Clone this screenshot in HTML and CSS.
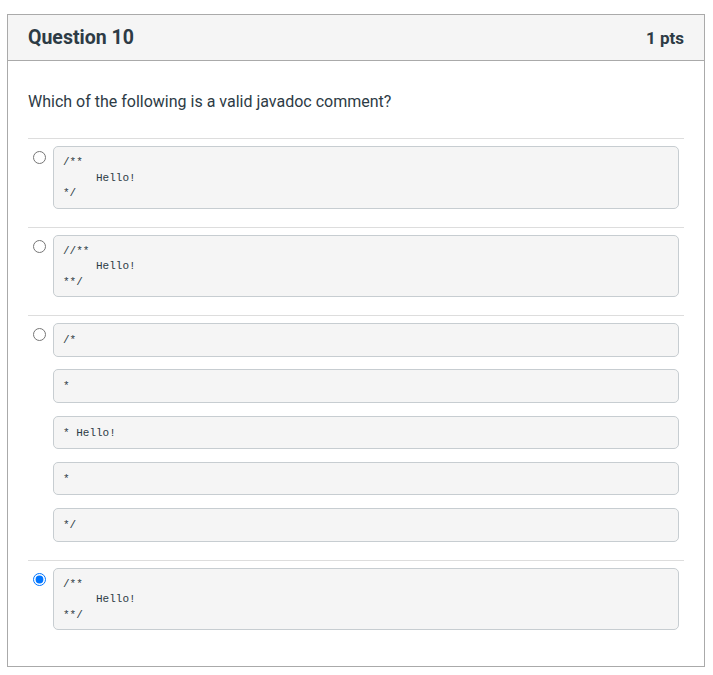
FILE: index.html
```html
<!DOCTYPE html>
<html>
<head>
<meta charset="utf-8">
<link rel="stylesheet" href="styles.css">
</head>
<body>
<div class="card">
  <div class="card-header">
    <h2 class="q-title">Question 10</h2>
    <span class="q-points">1 pts</span>
  </div>
  <div class="card-body">
    <p class="q-text">Which of the following is a valid javadoc comment?</p>
    <div class="answer">
      <input class="radio" type="radio" name="q10">
      <div class="boxes">
        <pre class="code multi">/**
     Hello!
*/</pre>
      </div>
    </div>
    <div class="answer">
      <input class="radio" type="radio" name="q10">
      <div class="boxes">
        <pre class="code multi">//**
     Hello!
**/</pre>
      </div>
    </div>
    <div class="answer">
      <input class="radio" type="radio" name="q10">
      <div class="boxes">
        <pre class="code single">/*</pre>
        <pre class="code single">*</pre>
        <pre class="code single">* Hello!</pre>
        <pre class="code single">*</pre>
        <pre class="code single">*/</pre>
      </div>
    </div>
    <div class="answer">
      <input class="radio" type="radio" name="q10" checked>
      <div class="boxes">
        <pre class="code multi">/**
     Hello!
**/</pre>
      </div>
    </div>
  </div>
</div>
</body>
</html>
```

FILE: styles.css
```css
html, body {
  margin: 0;
  padding: 0;
  background: #ffffff;
}

body {
  font-family: Roboto, "Liberation Sans", sans-serif;
  color: #2d3b45;
}

.card {
  margin: 14px 8px 0 7px;
  border: 1px solid #aaaaaa;
}

.card-header {
  height: 45px;
  background: #f5f5f5;
  border-bottom: 1px solid #aaaaaa;
  display: flex;
  align-items: center;
  justify-content: space-between;
  padding: 0 20px;
}

.q-title {
  margin: 0;
  font-size: 19.5px;
  font-weight: 700;
  color: #2d3b45;
}

.q-points {
  font-size: 17px;
  font-weight: 700;
  color: #2d3b45;
}

.card-body {
  padding: 20px 20px 18px;
}

.q-text {
  margin: 9px 0 24px;
  font-size: 16px;
  line-height: 24px;
}

.answer {
  display: flex;
  align-items: flex-start;
  border-top: 1px solid #dddddd;
  padding: 7px 0 18px;
}

.radio {
  flex-shrink: 0;
  width: 13px;
  height: 13px;
  margin: 5px 7px 0 5px;
  accent-color: #0075ff;
}

.boxes {
  flex: 1;
  margin-right: 5px;
  display: flex;
  flex-direction: column;
  gap: 12.75px;
}

.code {
  margin: 0;
  background: #f5f5f5;
  border: 1px solid #c7cdd1;
  border-radius: 5px;
  font-family: "Liberation Mono", "DejaVu Sans Mono", monospace;
  font-size: 11px;
  line-height: 15.5px;
  color: #2d3b45;
  padding: 8px 9px 6px;
  white-space: pre;
}

.code.single {
  padding: 9px 9px 7px;
}
```
